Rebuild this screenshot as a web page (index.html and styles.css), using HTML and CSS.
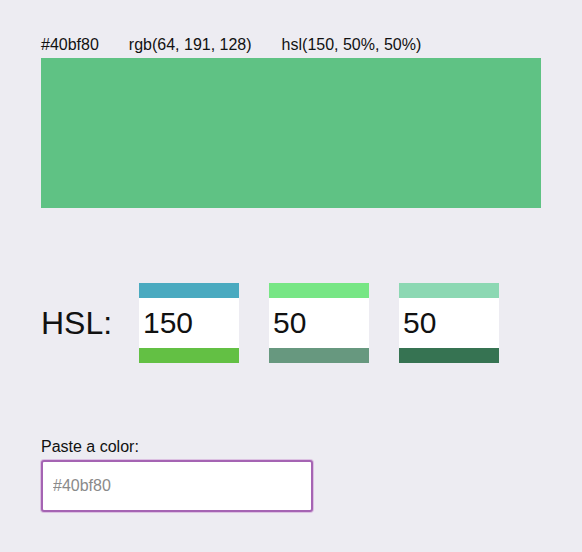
FILE: index.html
```html
<!DOCTYPE html>
<html>
	<head>
		<meta charset="UTF-8">
		<title>Color</title>
		<link rel="stylesheet" href="styles.css">
	</head>
	<body>
		<div class="app">
			<div class="values">
				<span>#40bf80</span>
				<span>rgb(64, 191, 128)</span>
				<span>hsl(150, 50%, 50%)</span>
			</div>
			<div class="swatch"></div>

			<div class="hsl">
				<span class="hsl-label">HSL:</span>
				<input class="chan hue" type="text" value="150">
				<input class="chan sat" type="text" value="50">
				<input class="chan lig" type="text" value="50">
			</div>

			<label class="paste">
				<span>Paste a color:</span>
				<input type="text" placeholder="#40bf80">
			</label>
		</div>
	</body>
</html>
```

FILE: styles.css
```css
html, body{margin: 0; padding: 0;}
body{
	background-color: #edecf2;
	font-family: "Liberation Sans", Arial, sans-serif;
	color: #111;
}
.app{padding: 35px 41px 20px;}

.values{
	display: flex;
	gap: 30px;
	font-size: 16px;
	line-height: 20px;
	margin-bottom: 3px;
}
.swatch{
	width: 500px;
	height: 150px;
	background-color: #5fc284;
}

.hsl{
	display: flex;
	align-items: center;
	gap: 30px;
	margin-top: 75px;
}
.hsl-label{
	font-size: 32px;
	width: 68px;
}
.chan{
	box-sizing: border-box;
	width: 100px;
	height: 80px;
	margin: 0;
	padding: 0 4px;
	border: none;
	border-top: 15px solid;
	border-bottom: 15px solid;
	background-color: #fff;
	font-family: "Liberation Sans", Arial, sans-serif;
	font-size: 30px;
	color: #111;
	outline: none;
}
.hue{border-top-color: #4aaac0; border-bottom-color: #63c044;}
.sat{border-top-color: #77e685; border-bottom-color: #67987f;}
.lig{border-top-color: #8cd8b3; border-bottom-color: #367352;}

.paste{
	display: block;
	margin-top: 74px;
	font-size: 16px;
	line-height: 20px;
}
.paste span{display: block; margin-bottom: 3px;}
.paste input{
	box-sizing: border-box;
	width: 272px;
	height: 52px;
	margin: 0;
	padding: 0 10px;
	border: 2px solid #a564b3;
	border-radius: 3px;
	box-shadow: 0 0 0 1px #dcc0e2;
	background-color: #fff;
	font-family: "Liberation Sans", Arial, sans-serif;
	font-size: 16px;
	outline: none;
}
.paste input::placeholder{color: #8a8a8a;}
```
